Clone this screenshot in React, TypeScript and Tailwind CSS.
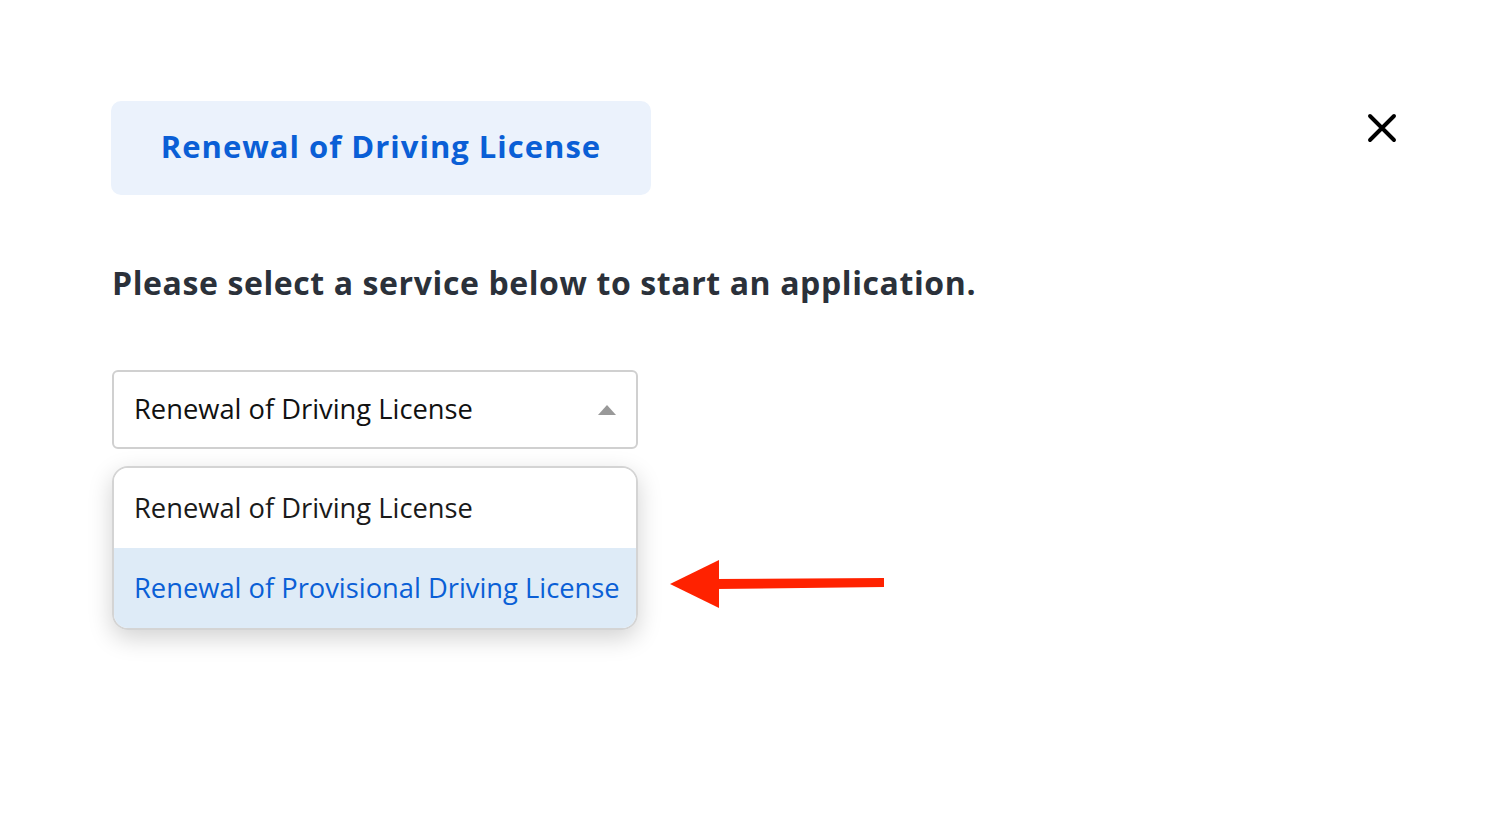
const options = [
  "Renewal of Driving License",
  "Renewal of Provisional Driving License",
];

function App() {
  return (
    <div className="min-h-screen bg-white font-['Open_Sans',sans-serif]">
      <div className="flex items-start justify-between pl-[111px] pr-[93px] pt-[101px]">
        <div className="flex h-[94px] w-[540px] items-center justify-center rounded-[10px] bg-[#ebf2fc]">
          <h1 className="-mt-[3px] text-[31px] font-bold tracking-[1px] text-[#0a5fd6]">Renewal of Driving License</h1>
        </div>
        <button className="mt-[12px] text-black">
          <svg width="30" height="30" viewBox="0 0 30 30" fill="none" stroke="currentColor" strokeWidth="3.9" strokeLinecap="round">
            <path d="M3 3 L27 27 M27 3 L3 27" />
          </svg>
        </button>
      </div>

      <p className="mt-[68px] pl-[112px] text-[32px] font-bold leading-[40px] tracking-[0.6px] text-[#2b313a]">
        Please select a service below to start an application.
      </p>

      <div className="mt-[67px] flex items-end pl-[112px]">
        <div className="w-[526px]">
          <div className="flex h-[79px] items-center justify-between rounded-[6px] border-2 border-[#d0d0d0] pl-[20px] pr-[20px]">
            <span className="text-[27.3px] text-[#111]">{options[0]}</span>
            <span className="h-0 w-0 border-x-[9px] border-b-[10px] border-x-transparent border-b-[#999]" />
          </div>
          <div className="mt-[17px] overflow-hidden rounded-[16px] border-2 border-[#d4d4d4] shadow-[0_8px_24px_rgba(0,0,0,0.18)]">
            <div className="flex h-[80px] items-center bg-white pl-[20px] text-[27.3px] text-[#1a1a1a]">
              {options[0]}
            </div>
            <div className="flex h-[80px] items-center bg-[#deebf7] pl-[20px] text-[27.3px] text-[#0a5fd6]">
              {options[1]}
            </div>
          </div>
        </div>
        <svg className="mb-[20px] ml-[32px]" width="216" height="52" viewBox="0 0 216 52">
          <polygon points="0,26 49,2 49,50" fill="#ff2200" />
          <polygon points="46,21 214,20 214,29 46,31" fill="#ff2200" />
        </svg>
      </div>
    </div>
  );
}

export default App;
